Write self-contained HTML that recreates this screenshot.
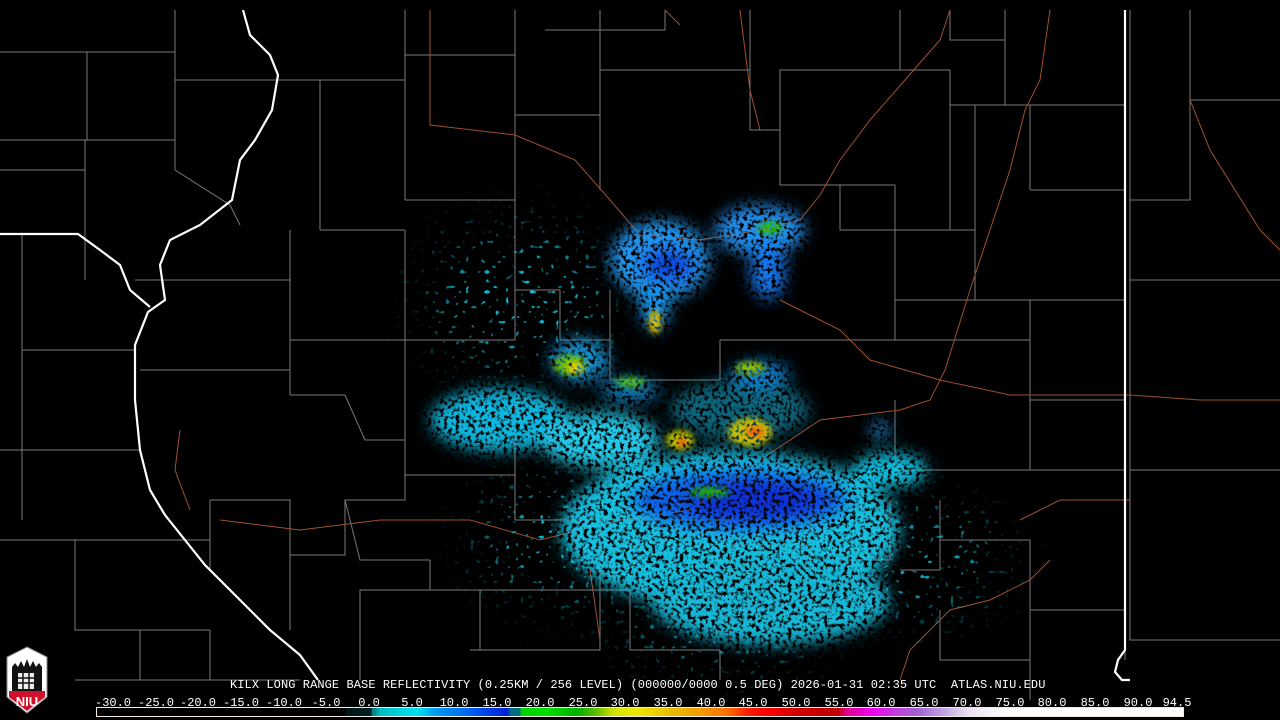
<!DOCTYPE html>
<html><head><meta charset="utf-8"><style>
html,body{margin:0;padding:0;background:#000;width:1280px;height:720px;overflow:hidden;position:relative}
svg{position:absolute;left:0;top:0}
.t{position:absolute;color:#fff;font-family:"Liberation Mono",monospace;font-size:12px;white-space:pre;line-height:12px}
.l{position:absolute;top:697px;color:#fff;font-family:"Liberation Mono",monospace;font-size:12px;line-height:12px;transform:translateX(-50%);white-space:pre}
.bar{position:absolute;left:96px;top:707px;width:1086px;height:8px;border:1px solid #f4e8e0;
background:linear-gradient(90deg,#000 0px,#000 248px,#001414 249px,#002020 274px,#007878 275px,#00b8c0 283px,#00d0d8 300px,#00e0f0 320px,#0098f0 340px,#0070f0 365px,#0040e8 390px,#0020d8 410px,#007080 414px,#007080 423px,#00d000 424px,#00e000 450px,#00b000 480px,#60c000 500px,#d0e000 515px,#f0e800 540px,#e8c000 570px,#f0a000 600px,#ff7000 630px,#ff2000 650px,#ff0000 670px,#d00000 700px,#c00000 740px,#e00090 750px,#f000f0 775px,#c040d8 800px,#a060d0 820px,#c0a0e0 845px,#e8e0f0 870px,#fff 910px,#fff 1086px)}
</style></head><body>
<svg width="1280" height="720" viewBox="0 0 1280 720">
<defs>
<filter id="b" x="-50%" y="-50%" width="200%" height="200%">
<feGaussianBlur in="SourceGraphic" stdDeviation="8" result="bl"/>
<feTurbulence type="fractalNoise" baseFrequency="0.25" numOctaves="2" seed="3" result="n"/>
<feColorMatrix in="n" type="matrix" values="0 0 0 0 0  0 0 0 0 0  0 0 0 0 0  5 0 0 0 -1.6" result="m"/>
<feComposite in="bl" in2="m" operator="in"/>
</filter>
<filter id="s" x="-50%" y="-50%" width="200%" height="200%">
<feGaussianBlur in="SourceGraphic" stdDeviation="3" result="bl"/>
<feTurbulence type="fractalNoise" baseFrequency="0.3" numOctaves="1" seed="7" result="n"/>
<feColorMatrix in="n" type="matrix" values="0 0 0 0 0  0 0 0 0 0  0 0 0 0 0  5 0 0 0 -1.5" result="m"/>
<feComposite in="bl" in2="m" operator="in"/>
</filter>
<filter id="f" x="-50%" y="-50%" width="200%" height="200%">
<feGaussianBlur in="SourceGraphic" stdDeviation="30" result="bl"/>
<feTurbulence type="fractalNoise" baseFrequency="0.2" numOctaves="1" seed="11" result="n"/>
<feColorMatrix in="n" type="matrix" values="0 0 0 0 0  0 0 0 0 0  0 0 0 0 0  12 0 0 0 -7.8" result="m"/>
<feComposite in="bl" in2="m" operator="in"/>
</filter>
</defs>
<g stroke="#7a7a7a" stroke-width="1" fill="none">
<path d="M0 52H175V10M87 52V140M0 140H175V52M175 10V170M85 140V230M0 170H85M175 80H320V230M320 80H405V10M405 55H515V10M515 55V115M405 55V200M320 230H405M405 200H515V115H600V10M600 115V190M515 115V200M545 30H600M600 30H665M665 30V10M750 10V70M600 70H750V130H780V70H900V10M780 130V185H840V230H950V70H900M950 10V40H1005V10M1005 40V105M950 105H1125M950 70V105M975 105V230M780 185H895V340M895 230H975M975 230V300H1030V400M895 300H975M895 340H1030M1030 400H1125M1030 300H1125M1030 190H1125M1030 105V190"/>
<path d="M22 235V350H135M22 350V450H140M22 450V520M0 450H22M85 230V280M135 280H290V230M290 230V340H405V230M290 340V395M140 370H290M290 395H345L365 440H405V340M405 340H515V290M515 200V290H560M560 290V340H610M610 340V380M610 380H720M720 340H895M720 340V380M610 290V340M405 440V475H515V395M405 475V500H345L360 560H430M405 475H410M345 500V555H290V500H210M210 500V570M430 560V590H480V650M430 590H360V650M290 555V630M470 650H600V590H430"/>
<path d="M515 475V520H600V590M600 520H730V545H810V520M600 590H630V650H720M730 545V640M810 520V575H830V620M890 500V560H830M940 500V540H1030V610M1030 470H1125M1030 470V400M895 470H1030M895 400V470M900 570H940V540M1030 610H1125M940 610V660H1030V610M720 650V680M1130 10V640H1280M1130 280H1280M1130 470H1280M1190 10V100H1280M1190 100V200H1130"/>
<path d="M75 540H210M75 540V630H140V680M140 630H210M210 630V680M0 540H75M75 680H300M360 650V680M1030 660V700M1125 610V660"/>
<path d="M175 170L230 205L240 225" />
</g>
<g stroke="#a0502a" stroke-width="1" fill="none">
<path d="M430 10V125L515 135L575 160L610 200L640 235L700 240L760 230L800 220L820 195L840 160L870 120L905 80L940 40L950 10"/>
<path d="M740 10L750 90L760 130"/>
<path d="M665 10L680 25"/>
<path d="M1050 10L1040 80L1025 110L1010 170L990 230L970 290L945 370L930 400L900 410L820 420L760 460L720 490L690 510L620 520L540 540L470 520L380 520L300 530L220 520"/>
<path d="M780 300L840 330L870 360L940 380L1010 395L1130 395L1200 400L1280 400"/>
<path d="M1190 100L1210 150L1260 230L1280 250"/>
<path d="M1020 520L1060 500L1130 500"/>
<path d="M590 570L600 640"/>
<path d="M900 680L910 650L950 610L990 600L1030 580L1050 560"/>
<path d="M180 430L175 470L190 510"/>
</g>
<g stroke="#fff" stroke-width="2.2" fill="none">
<path d="M243 10L250 35L270 55L278 75L272 110L255 140L240 160L232 200L200 225L170 240L160 265L165 300L148 312L135 345L135 400L140 450L150 490L165 515L205 565L230 590L270 630L300 655L318 680"/>
<path d="M0 234L78 234L100 250L120 265L130 290L150 307"/>
<path d="M1125 10V650L1118 660L1115 672L1122 680L1130 680"/>
</g>
<g filter="url(#f)">
<ellipse cx="520" cy="300" rx="90" ry="70" fill="#10c8e0"/>
<ellipse cx="900" cy="560" rx="100" ry="50" fill="#10c8e0"/>
<ellipse cx="560" cy="540" rx="80" ry="60" fill="#10c8e0"/>
<ellipse cx="720" cy="630" rx="100" ry="30" fill="#10c8e0"/>
</g>
<g filter="url(#b)">
<ellipse cx="500" cy="420" rx="70" ry="32" fill="#10b8e0"/>
<ellipse cx="600" cy="440" rx="60" ry="28" fill="#20c8e8"/>
<ellipse cx="730" cy="530" rx="170" ry="80" fill="#18c0e0"/>
<ellipse cx="770" cy="600" rx="120" ry="45" fill="#14b8d8"/>
<ellipse cx="740" cy="500" rx="110" ry="32" fill="#1060e8"/>
<ellipse cx="755" cy="500" rx="70" ry="22" fill="#0830d8"/>
<ellipse cx="660" cy="260" rx="50" ry="40" fill="#2098f0"/>
<ellipse cx="668" cy="265" rx="28" ry="18" fill="#1048e0"/>
<ellipse cx="655" cy="305" rx="15" ry="25" fill="#1898f0"/>
<ellipse cx="760" cy="230" rx="45" ry="25" fill="#2090f0"/>
<ellipse cx="768" cy="270" rx="18" ry="30" fill="#1878f0"/>
<ellipse cx="890" cy="470" rx="38" ry="18" fill="#10c0e0"/>
<ellipse cx="740" cy="410" rx="70" ry="30" fill="#0e90b0" opacity=".7"/>
<ellipse cx="760" cy="375" rx="30" ry="14" fill="#1080d0"/>
<ellipse cx="580" cy="360" rx="30" ry="22" fill="#1590d0"/>
<ellipse cx="630" cy="390" rx="30" ry="12" fill="#1080c0"/>
<ellipse cx="880" cy="430" rx="10" ry="8" fill="#20a0f0"/>
</g>
<g filter="url(#s)">
<ellipse cx="655" cy="322" rx="6" ry="12" fill="#e0c000"/>
<ellipse cx="570" cy="365" rx="16" ry="10" fill="#70c000"/>
<ellipse cx="575" cy="368" rx="7" ry="5" fill="#f0d000"/>
<ellipse cx="750" cy="368" rx="15" ry="6" fill="#90c000"/>
<ellipse cx="750" cy="432" rx="22" ry="14" fill="#c8c000"/>
<ellipse cx="755" cy="432" rx="10" ry="6" fill="#f06000"/>
<ellipse cx="680" cy="440" rx="14" ry="10" fill="#b0c000"/>
<ellipse cx="682" cy="442" rx="5" ry="5" fill="#f04000"/>
<ellipse cx="770" cy="228" rx="12" ry="6" fill="#30c000"/>
<ellipse cx="710" cy="492" rx="20" ry="5" fill="#20b000"/>
<ellipse cx="630" cy="382" rx="15" ry="5" fill="#50c020"/>
</g>
</svg>
<svg width="50" height="70" viewBox="0 0 50 70" style="left:2px;top:645px">
<path d="M25 2L45 12V52L25 68L5 52V12Z" fill="#fff" stroke="#888" stroke-width="1"/>
<path d="M10 46V22l3 -4 3 4 3-6 3 6 3-8 3 8 3-6 3 6 3-4 3 4V46Z" fill="#111"/>
<rect x="16" y="28" width="16" height="16" fill="#eee"/>
<path d="M16 33H32M16 38H32M21 28V44M27 28V44" stroke="#111" stroke-width="1.5"/>
<path d="M7 46H43V52L25 66L7 52Z" fill="#d0112b"/>
<text x="25" y="61" text-anchor="middle" font-family="Liberation Sans,sans-serif" font-weight="bold" font-size="13" fill="#fff">NIU</text>
</svg>
<div class="t" style="left:230px;top:679px;letter-spacing:0.08px">KILX LONG RANGE BASE REFLECTIVITY (0.25KM / 256 LEVEL) (000000/0000 0.5 DEG) 2026-01-31 02:35 UTC  ATLAS.NIU.EDU</div>
<div class="l" style="left:113px">-30.0</div><div class="l" style="left:156px">-25.0</div><div class="l" style="left:198px">-20.0</div><div class="l" style="left:241px">-15.0</div><div class="l" style="left:284px">-10.0</div><div class="l" style="left:326px">-5.0</div><div class="l" style="left:369px">0.0</div><div class="l" style="left:412px">5.0</div><div class="l" style="left:454px">10.0</div><div class="l" style="left:497px">15.0</div><div class="l" style="left:540px">20.0</div><div class="l" style="left:583px">25.0</div><div class="l" style="left:625px">30.0</div><div class="l" style="left:668px">35.0</div><div class="l" style="left:711px">40.0</div><div class="l" style="left:753px">45.0</div><div class="l" style="left:796px">50.0</div><div class="l" style="left:839px">55.0</div><div class="l" style="left:881px">60.0</div><div class="l" style="left:924px">65.0</div><div class="l" style="left:967px">70.0</div><div class="l" style="left:1010px">75.0</div><div class="l" style="left:1052px">80.0</div><div class="l" style="left:1095px">85.0</div><div class="l" style="left:1138px">90.0</div><div class="l" style="left:1177px">94.5</div>
<div class="bar"></div>
</body></html>
